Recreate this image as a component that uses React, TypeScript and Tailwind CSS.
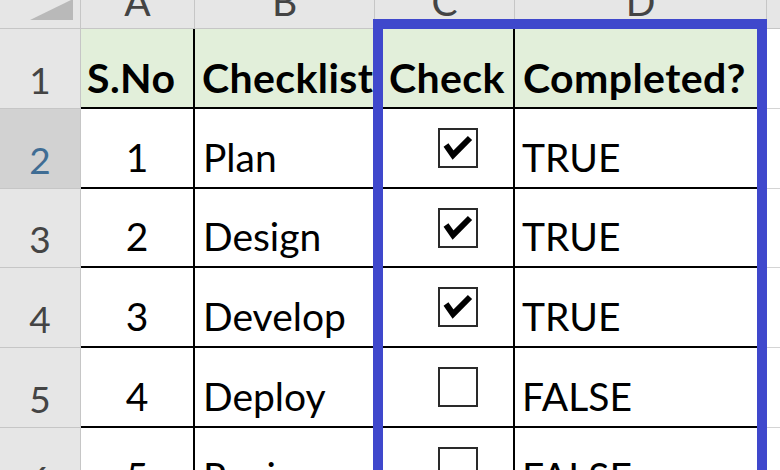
import React from "react"

const rows = [
  { n: "2", no: "1", task: "Plan", done: true },
  { n: "3", no: "2", task: "Design", done: true },
  { n: "4", no: "3", task: "Develop", done: true },
  { n: "5", no: "4", task: "Deploy", done: false },
  { n: "6", no: "5", task: "Review", done: false },
]

const heights = ["h-[80px]", "h-[79px]", "h-[80px]", "h-[80px]", "h-[80px]"]

function Box({ checked }: { checked: boolean }) {
  return (
    <div className="w-[40px] h-[40px] border-2 border-[#2a2a2a] bg-white">
      {checked && (
        <svg width="36" height="36" viewBox="0 0 36 36">
          <path d="M6 15 L13 25 L30 8" stroke="#000" strokeWidth="6" fill="none" strokeLinejoin="miter" />
        </svg>
      )}
    </div>
  )
}

export default function App() {
  return (
    <div className="relative w-[780px] h-[470px] overflow-hidden bg-white font-[Lato,sans-serif] text-black">
      {/* column letters */}
      <div className="flex h-[29px] bg-[#e6e6e6] border-b border-[#c6c6c6] text-[#444] text-[39px] leading-none overflow-hidden">
        <div className="w-[81px] border-r border-[#c6c6c6] relative">
          <svg width="80" height="28" className="absolute top-0 left-0">
            <polygon points="30,20 73,20 73,0 71,0" fill="#b9b9b9" />
          </svg>
        </div>
        <div className="w-[114px] border-r border-[#c6c6c6] flex justify-center items-end pb-[7px]">A</div>
        <div className="w-[180px] border-r border-[#c6c6c6] flex justify-center items-end pb-[7px]">B</div>
        <div className="w-[140px] border-r border-[#c6c6c6] flex justify-center items-end pb-[7px]">C</div>
        <div className="w-[252px] border-r border-[#c6c6c6] flex justify-center items-end pb-[7px]">D</div>
        <div className="flex-1" />
      </div>

      {/* header row */}
      <div className="flex h-[80px] text-[41px] leading-none font-bold tracking-[0.4px]">
        <div className="w-[81px] bg-[#e6e6e6] border-r border-b border-[#c6c6c6] flex justify-center items-end pb-[10px] text-[37px] font-normal tracking-normal text-[#444]">1</div>
        <div className="w-[114px] bg-[#e2efda] border-r-2 border-b-2 border-black flex items-end pl-[6px] pb-[9px]">S.No</div>
        <div className="w-[180px] bg-[#e2efda] border-r-2 border-b-2 border-black flex items-end pl-[7px] pb-[9px] overflow-hidden whitespace-nowrap">Checklist</div>
        <div className="w-[140px] bg-[#e2efda] border-r-2 border-b-2 border-black flex items-end pl-[14px] pb-[9px]">Check</div>
        <div className="w-[252px] bg-[#e2efda] border-b-2 border-black flex items-end pl-[8px] pb-[9px] whitespace-nowrap">Completed?</div>
        <div className="flex-1 border-b border-[#d4d4d4]" />
      </div>

      {rows.map((r, i) => (
        <div key={r.n} className={`flex ${heights[i]} text-[39px] leading-none`}>
          <div
            className={`w-[81px] border-r border-b border-[#c6c6c6] flex justify-center items-end pb-[10px] text-[37px] ${
              i === 0 ? "bg-[#d2d2d2] text-[#3f6d94]" : "bg-[#e6e6e6] text-[#444]"
            }`}
          >
            {r.n}
          </div>
          <div className="w-[114px] border-r-2 border-b-2 border-black flex justify-center items-end pb-[10px]">{r.no}</div>
          <div className="w-[180px] border-r-2 border-b-2 border-black flex items-end pl-[8px] pb-[10px]">{r.task}</div>
          <div className="w-[140px] border-r-2 border-b-2 border-black pl-[63px] pt-[19px]">
            <Box checked={r.done} />
          </div>
          <div className="w-[252px] border-b-2 border-black flex items-end pl-[7px] pb-[10px]">{r.done ? "TRUE" : "FALSE"}</div>
          <div className="flex-1 border-b border-[#d4d4d4]" />
        </div>
      ))}

      {/* highlight box drawn over columns C and D */}
      <div className="absolute left-[373px] top-[19px] w-[394px] h-[480px] border-[10px] border-[#3f48cc]" />
    </div>
  )
}
